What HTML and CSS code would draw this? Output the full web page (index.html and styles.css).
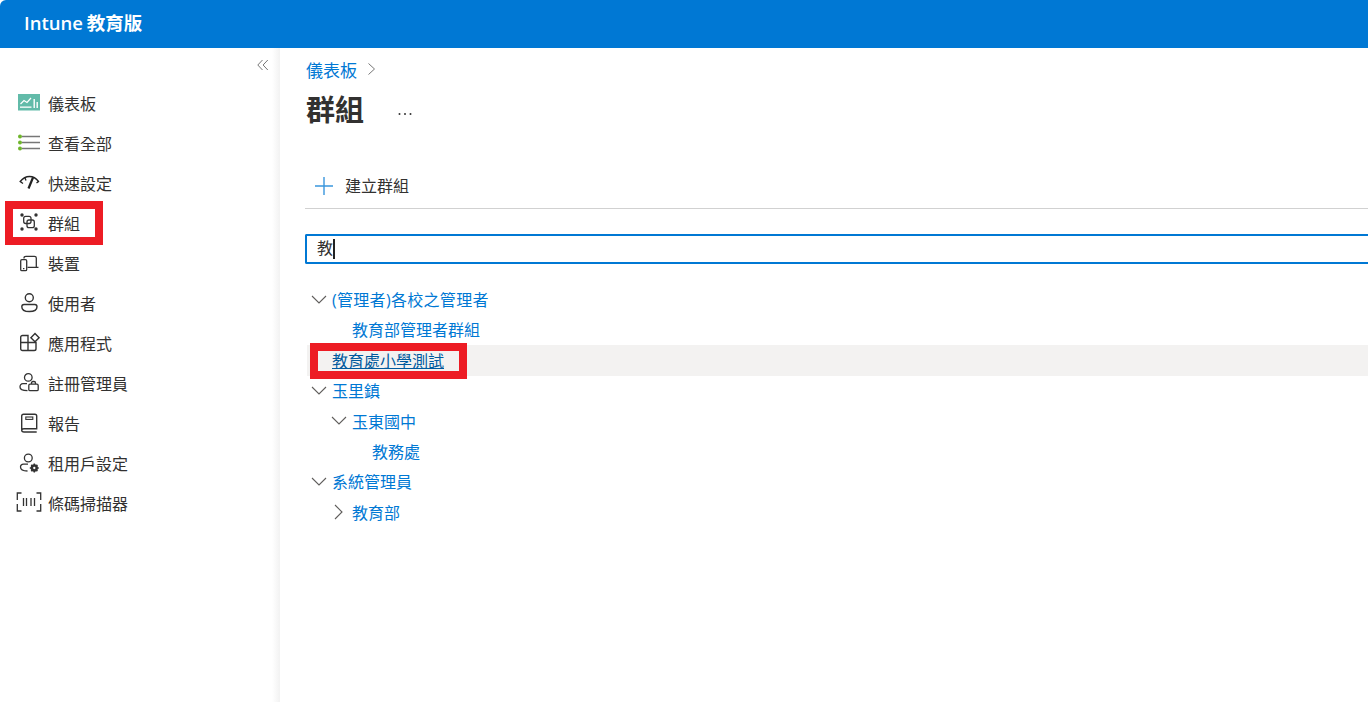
FILE: index.html
```html
<!DOCTYPE html>
<html lang="zh-Hant">
<head>
<meta charset="utf-8">
<title>Intune 教育版</title>
<link rel="stylesheet" href="styles.css">
</head>
<body>
<header class="topbar"><span class="brand">Intune 教育版</span></header>
<div class="shell">
  <nav class="sidenav">
    <div class="collapse">
      <svg width="12" height="12" viewBox="0 0 12 12" fill="none" stroke="#777" stroke-width="1"><path d="M5.500 1 .8 6l4.700 5M10.800 1 6.100 6l4.700 5"/></svg>
    </div>
    <ul class="navlist">
      <li class="navitem">
        <svg class="navicon" viewBox="0 0 22 20"><rect y="1" width="22" height="16.500" fill="#62bba9"/><path d="M2.500 11 6 7.500l3 2L13 5" fill="none" stroke="#fff" stroke-width="1.200"/><rect x="2" y="13.500" width="11.500" height="1.300" fill="#fff"/><rect x="15.500" y="6" width="1.400" height="9" fill="#fff"/><rect x="18.500" y="9" width="1.400" height="6" fill="#fff"/></svg>
        <span>儀表板</span>
      </li>
      <li class="navitem">
        <svg class="navicon" viewBox="0 0 22 20"><path d="M4 3.500h18M4 9.500h18M4 15.500h18" stroke="#777" stroke-width="1.500"/><circle cx="2" cy="3.500" r="2" fill="#6fb52c"/><circle cx="2" cy="9.500" r="2" fill="#6fb52c"/><circle cx="2" cy="15.500" r="2" fill="#6fb52c"/></svg>
        <span>查看全部</span>
      </li>
      <li class="navitem">
        <svg class="navicon" viewBox="0 0 22 20" fill="none" stroke="#222" stroke-width="1.300"><path d="M5 10.500 2.200 8.500C5 5 8 3.500 11.500 3.500s6.500 1.500 9 5L18.500 10"/><path d="M15 4.500 10.500 15.500" stroke-width="2.200"/><path d="M7 5 8 7.500"/></svg>
        <span>快速設定</span>
      </li>
      <li class="navitem">
        <svg class="navicon" viewBox="0 0 22 20" fill="none" stroke="#333" stroke-width="1.300"><circle cx="4" cy="2" r="1.700" fill="#333" stroke="none"/><circle cx="18" cy="2" r="1.700" fill="#333" stroke="none"/><circle cx="4" cy="16" r="1.700" fill="#333" stroke="none"/><circle cx="18" cy="16" r="1.700" fill="#333" stroke="none"/><rect x="5.700" y="3.300" width="7.300" height="7.200" rx="2"/><rect x="9" y="7" width="7.300" height="7.700" rx="2"/></svg>
        <span>群組</span>
      </li>
      <li class="navitem">
        <svg class="navicon" viewBox="0 0 22 20" fill="none" stroke="#333" stroke-width="1.300"><path d="M6 5.500V5C6 3.800 6.800 3.300 8 3.300h8.500c1.200 0 1.800.5 1.800 1.700v9.300M9.500 14.400h11"/><rect x="2.700" y="6.700" width="6" height="11" rx="1.200"/><path d="M5 15.700h1.400"/></svg>
        <span>裝置</span>
      </li>
      <li class="navitem">
        <svg class="navicon" viewBox="0 0 22 20" fill="none" stroke="#333" stroke-width="1.400"><circle cx="11.300" cy="4.700" r="4"/><path d="M6 11.500h10.800c1.200 0 2.200 1 2.200 2.200 0 3-3.200 4.800-7.700 4.800s-7.500-1.800-7.500-4.800c0-1.200 1-2.200 2.200-2.200z"/></svg>
        <span>使用者</span>
      </li>
      <li class="navitem">
        <svg class="navicon" viewBox="0 0 22 20" fill="none" stroke="#333" stroke-width="1.400"><path d="M4.500 2.500H10v15H4.500A1.800 1.800 0 0 1 2.700 15.700V4.300A1.800 1.800 0 0 1 4.500 2.500zM2.700 9.500H18v6.200a1.800 1.800 0 0 1-1.800 1.800H10"/><path d="m17 .6 4.100 4.100-4.100 4.100-4.100-4.100z"/></svg>
        <span>應用程式</span>
      </li>
      <li class="navitem">
        <svg class="navicon" viewBox="0 0 22 20" fill="none" stroke="#333" stroke-width="1.300"><circle cx="10.300" cy="4.400" r="3.800"/><path d="M9 10.700H5C3 10.700 2 12 2 14c0 2.500 3 3.700 7.500 3.700"/><rect x="10.800" y="11.200" width="9.400" height="6.500" rx="1.300"/><path d="M13.500 11v-1c0-1 .5-1.500 1.500-1.500h1c1 0 1.500.5 1.500 1.500v1"/></svg>
        <span>註冊管理員</span>
      </li>
      <li class="navitem">
        <svg class="navicon" viewBox="0 0 22 20" fill="none" stroke="#333" stroke-width="1.400"><path d="M3.700 16.500V3C3.700 1.800 4.300 1.200 5.500 1.200h11.400c1.200 0 1.800.6 1.800 1.800v12.800H6c-1.500 0-2.300.6-2.300 1.500s.8 1.700 2.300 1.700h12.700"/><rect x="7.800" y="4" width="7" height="2.400" stroke-width="1.100"/></svg>
        <span>報告</span>
      </li>
      <li class="navitem">
        <svg class="navicon" viewBox="0 0 22 20" fill="none" stroke="#333" stroke-width="1.300"><circle cx="10.300" cy="5" r="3.900"/><path d="M10 11.200H5.500C3.500 11.200 2.500 12.500 2.500 14c0 2.500 2.500 4 7 4"/><circle cx="16.300" cy="15" r="2.400" stroke-width="2.500"/><path d="M16.300 10.500v2M16.300 17.500v2M11.800 15h2M18.800 15h2M13.200 11.900l1.300 1.300M18.100 16.800l1.300 1.300M13.200 18.100l1.300-1.300M18.100 13.200l1.300-1.300" stroke-width="1.500"/></svg>
        <span>租用戶設定</span>
      </li>
      <li class="navitem">
        <svg class="navicon" viewBox="0 0 22 20" fill="none" stroke="#333" stroke-width="1.300"><path d="M3.500 0H-.7v7M-.7 11v7h4.200M18.500 0h4.200v7M22.700 11v7h-4.200M5.500 5v8M8.500 5v8M13 5v8M16.500 5v8"/></svg>
        <span>條碼掃描器</span>
      </li>
    </ul>
    <div class="callout callout-nav"></div>
  </nav>
  <main class="content">
    <div class="crumbs">
      <a class="crumb">儀表板</a>
      <svg width="10" height="14" viewBox="0 0 10 14" fill="none" stroke="#777"><path d="m1.500 1.500 6 5.500-6 5.500"/></svg>
    </div>
    <div class="titlerow">
      <h1 class="title">群組</h1>
      <svg class="more" width="14" height="4" viewBox="0 0 14 4" fill="#333"><circle cx="1.500" cy="2" r="1"/><circle cx="7" cy="2" r="1"/><circle cx="12.500" cy="2" r="1"/></svg>
    </div>
    <div class="commandbar">
      <svg class="plus" width="18" height="18" viewBox="0 0 18 18" fill="none" stroke="#3a96dd" stroke-width="1.400"><path d="M9 0v18M0 9h18"/></svg>
      <span>建立群組</span>
    </div>
    <div class="searchbox"><span class="query">教</span><span class="caret"></span></div>
    <ul class="tree">
      <li class="node lvl0"><svg class="chev" viewBox="0 0 16 16"><path d="m1 4 7 7 7-7"/></svg><a class="wide">(管理者)各校之管理者</a></li>
      <li class="node lvl1"><a>教育部管理者群組</a></li>
      <li class="node lvl0 selected"><a>教育處小學測試</a><div class="callout callout-row"></div></li>
      <li class="node lvl0"><svg class="chev" viewBox="0 0 16 16"><path d="m1 4 7 7 7-7"/></svg><a>玉里鎮</a></li>
      <li class="node lvl1"><svg class="chev" viewBox="0 0 16 16"><path d="m1 4 7 7 7-7"/></svg><a>玉東國中</a></li>
      <li class="node lvl2"><a>教務處</a></li>
      <li class="node lvl0"><svg class="chev" viewBox="0 0 16 16"><path d="m1 4 7 7 7-7"/></svg><a>系統管理員</a></li>
      <li class="node lvl1"><svg class="chev" viewBox="0 0 16 16"><path d="m4 1 7 7-7 7"/></svg><a>教育部</a></li>
    </ul>
  </main>
</div>
</body>
</html>
```
FILE: styles.css
```css
* { box-sizing: border-box; }
html, body { height: 100%; margin: 0; overflow: hidden; }
body {
  display: flex;
  flex-direction: column;
  background: #fff;
  color: #323130;
  font-family: "Open Sans", "Noto Sans CJK TC", sans-serif;
  font-size: 16px;
}
ul { list-style: none; margin: 0; padding: 0; }

.topbar {
  height: 48px;
  flex: none;
  display: flex;
  align-items: center;
  padding: 0 24px 5px;
  background: #0078d4;
  border-top-left-radius: 6px;
}
.brand { color: #fff; font-size: 18.500px; font-weight: 600; word-spacing: -1px; }

.shell { flex: 1; display: flex; min-height: 0; }

.sidenav {
  position: relative;
  width: 280px;
  flex: none;
  padding-top: 8px;
  background: linear-gradient(to right, #fff 272px, #f2f2f2 280px);
}
.collapse { height: 27px; padding: 3px 0 0 257px; display: flex; align-items: flex-start; }
.navitem {
  height: 40px;
  display: flex;
  align-items: center;
  gap: 8px;
  padding-left: 18px;
  color: #323130;
}
.navicon { width: 22px; height: 20px; flex: none; overflow: visible; }

.callout { position: absolute; border: 8px solid #ed1c24; pointer-events: none; }
.callout-nav { left: 5px; top: 153px; width: 98px; height: 44px; }
.callout-row { left: 3px; top: -2px; width: 157px; height: 36px; }

.content { flex: 1; min-width: 0; padding: 9px 0 0 25px; }
.crumbs { display: flex; align-items: center; gap: 10px; height: 24px; padding-left: 2px; }
.crumb { color: #0078d4; font-size: 17px; margin-left: -1px; }
.titlerow { display: flex; align-items: center; height: 40px; margin-top: 9px; }
.title { margin: 0; padding-left: 1px; font-size: 29px; font-weight: 600; line-height: 40px; color: #323130; }
.more { margin-left: 34px; margin-top: 7px; }
.commandbar {
  display: flex;
  align-items: center;
  gap: 12px;
  height: 58px;
  margin-top: 21px;
  padding: 12px 0 0 10px;
  border-bottom: 1px solid #d1d1d1;
  line-height: 1;
}
.searchbox {
  display: flex;
  align-items: center;
  height: 30px;
  margin-top: 25px;
  padding-left: 10px;
  border: 2px solid #0078d4;
  border-right-width: 0;
  border-radius: 2px 0 0 2px;
}
.query { color: #323130; margin-top: -5px; }
.caret { width: 2px; height: 20px; background: #222; margin-bottom: 1px; }

.tree { margin-top: 20.400px; margin-left: 2px; }
.node {
  position: relative;
  height: 30.400px;
  display: flex;
  align-items: center;
  color: #0078d4;
}
.node a { color: inherit; margin-bottom: 1px; }
.node a.wide { letter-spacing: .3px; }
.lvl0 { padding-left: 25px; }
.lvl1 { padding-left: 45px; }
.lvl2 { padding-left: 65px; }
.selected { background: #f3f2f1; }
.selected a { color: #005a9e; text-decoration: underline; }
.chev { width: 16px; height: 16px; flex: none; margin-left: -21px; margin-right: 5px; fill: none; stroke: #605e5c; stroke-width: 1.100; }
```
